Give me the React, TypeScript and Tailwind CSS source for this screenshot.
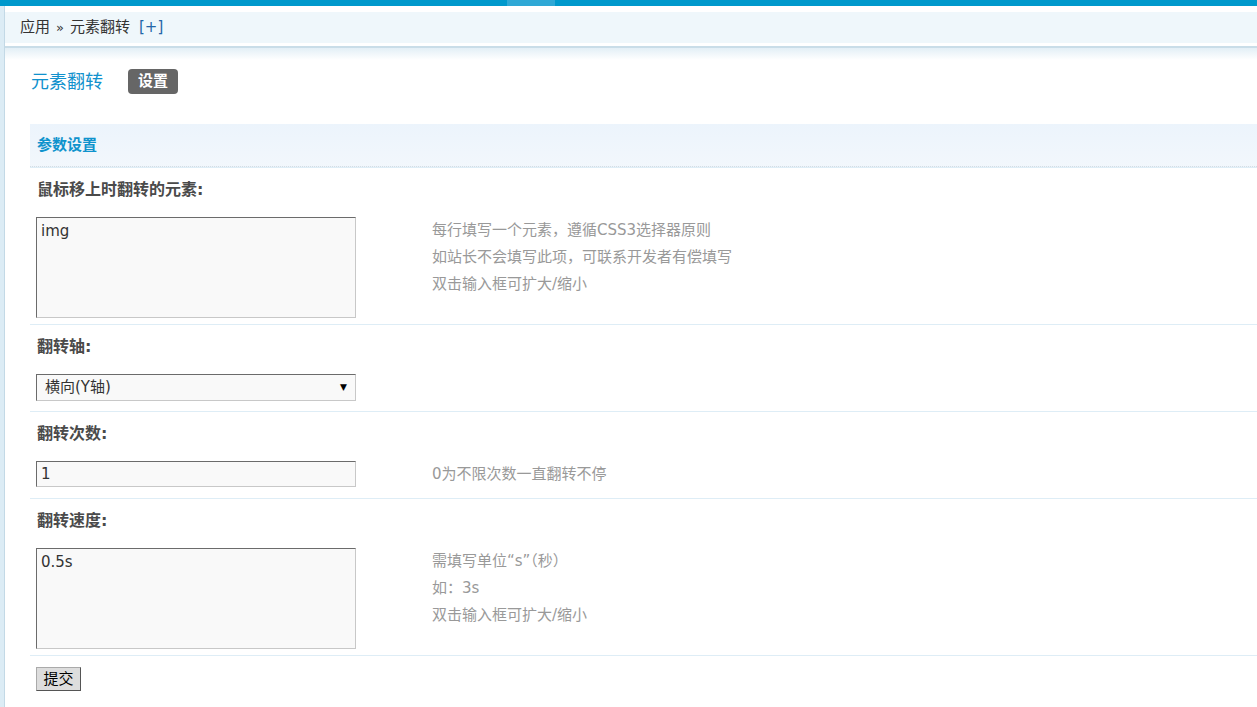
import { useState } from 'react';

const font = "font-['DejaVu_Sans','Noto_Sans_CJK_SC',sans-serif]";

function Label({ text }: { text: string }) {
  return (
    <div className="flex h-[44px] items-center border-t border-[#deedf6] pl-[7px] first:border-t-0">
      <span className="text-[16px] font-bold text-[#4a4a4a]">{text}</span>
    </div>
  );
}

function Tips({ lines }: { lines: string[] }) {
  return (
    <div className="ml-[76px] text-[15px] leading-[27px] text-[#999]">
      {lines.map((l) => (
        <div key={l}>{l}</div>
      ))}
    </div>
  );
}

const inset = 'border border-t-[#6b6b6b] border-l-[#6b6b6b] border-r-[#c8c8c8] border-b-[#c8c8c8] bg-[#f9f9f9]';

export default function App() {
  const [elements, setElements] = useState('img');
  const [axis, setAxis] = useState('y');
  const [count, setCount] = useState('1');
  const [speed, setSpeed] = useState('0.5s');

  return (
    <div className={`${font} flex min-h-[707px] w-[1257px] bg-white text-[#333]`}>
      <div className="w-[5px] shrink-0 border-r border-[#c3d9e6] bg-[#dcecf5]" />
      <div className="flex min-w-0 flex-1 flex-col">
        <div className="relative h-[6px] -ml-[5px] bg-[#0099cc]">
          <div className="absolute left-[507px] top-0 h-[6px] w-[48px] bg-[#2fa8d5]" />
        </div>
        <div className="mt-[6px] flex h-[31px] items-center bg-[#eff7fb] pl-[15px] text-[15px]">
          <span>应用</span>
          <span className="mx-[6px] text-[13px]">»</span>
          <span>元素翻转</span>
          <span className="ml-[9px] text-[#2366a8]">[+]</span>
        </div>
        <div className="mt-[3px] h-[2px] bg-[#c9dde8]" />
        <div className="h-[12px] bg-gradient-to-b from-[#e3eff6] to-white" />

        <div className="mt-[8px] flex items-center pl-[26px]">
          <span className="text-[18px] text-[#1191cd]">元素翻转</span>
          <span className="ml-[25px] flex h-[25px] w-[50px] items-center justify-center rounded-[4px] bg-[#666] text-[15px] font-bold text-white">
            设置
          </span>
        </div>

        <div className="ml-[25px] mt-[29px]">
          <div className="flex h-[43px] items-center border-b border-dotted border-[#d5dde3] bg-gradient-to-b from-[#ecf4fc] to-[#f2f7fc] pl-[7px]">
            <span className="text-[15px] font-bold text-[#0f93cd]">参数设置</span>
          </div>

          <Label text="鼠标移上时翻转的元素:" />
          <div className="flex items-start pl-[6px] pb-[6px] pt-[6px]">
            <textarea
              value={elements}
              onChange={(e) => setElements(e.target.value)}
              className={`${inset} block h-[101px] w-[320px] resize-none px-[4px] py-[2px] text-[15px] text-[#333] outline-none`}
            />
            <Tips lines={['每行填写一个元素，遵循CSS3选择器原则', '如站长不会填写此项，可联系开发者有偿填写', '双击输入框可扩大/缩小']} />
          </div>

          <Label text="翻转轴:" />
          <div className="flex pb-[10px] pl-[6px] pt-[6px]">
            <div className={`${inset} relative h-[27px] w-[320px]`}>
              <select
                value={axis}
                onChange={(e) => setAxis(e.target.value)}
                className="h-full w-full appearance-none bg-transparent pl-[8px] text-[15px] text-[#333] outline-none"
              >
                <option value="y">横向(Y轴)</option>
                <option value="x">纵向(X轴)</option>
              </select>
              <span className="pointer-events-none absolute right-[8px] top-[6px] text-[9px] text-black">▼</span>
            </div>
          </div>

          <Label text="翻转次数:" />
          <div className="flex items-start pb-[11px] pl-[6px] pt-[6px]">
            <input
              value={count}
              onChange={(e) => setCount(e.target.value)}
              className={`${inset} h-[26px] w-[320px] px-[4px] text-[15px] text-[#333] outline-none`}
            />
            <div className="ml-[76px] text-[15px] leading-[26px] text-[#999]">0为不限次数一直翻转不停</div>
          </div>

          <Label text="翻转速度:" />
          <div className="flex items-start pb-[6px] pl-[6px] pt-[6px]">
            <textarea
              value={speed}
              onChange={(e) => setSpeed(e.target.value)}
              className={`${inset} block h-[101px] w-[320px] resize-none px-[4px] py-[2px] text-[15px] text-[#333] outline-none`}
            />
            <Tips lines={['需填写单位“s”（秒）', '如：3s', '双击输入框可扩大/缩小']} />
          </div>

          <div className="border-t border-[#deedf6] pl-[6px] pt-[11px]">
            <button className="h-[24px] w-[45px] border border-t-[#aaa] border-l-[#aaa] border-r-[#555] border-b-[#555] bg-[#ddd] text-[15px] text-black">
              提交
            </button>
          </div>
        </div>
      </div>
    </div>
  );
}
